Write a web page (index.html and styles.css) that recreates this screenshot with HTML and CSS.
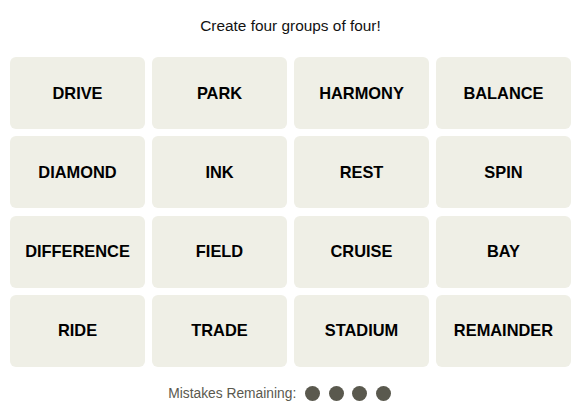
FILE: index.html
```html
<!DOCTYPE html>
<html>
<head>
<meta charset="utf-8">
<link rel="stylesheet" href="styles.css">
</head>
<body>
<main class="game">
  <p class="title">Create four groups of four!</p>
  <div class="board">
    <div class="tile">DRIVE</div>
    <div class="tile">PARK</div>
    <div class="tile">HARMONY</div>
    <div class="tile">BALANCE</div>
    <div class="tile">DIAMOND</div>
    <div class="tile">INK</div>
    <div class="tile">REST</div>
    <div class="tile">SPIN</div>
    <div class="tile">DIFFERENCE</div>
    <div class="tile">FIELD</div>
    <div class="tile">CRUISE</div>
    <div class="tile">BAY</div>
    <div class="tile">RIDE</div>
    <div class="tile">TRADE</div>
    <div class="tile">STADIUM</div>
    <div class="tile">REMAINDER</div>
  </div>
  <div class="mistakes">
    <span class="mistakes-label">Mistakes Remaining:</span>
    <span class="dots">
      <span class="dot"></span><span class="dot"></span><span class="dot"></span><span class="dot"></span>
    </span>
  </div>
</main>
</body>
</html>
```
FILE: styles.css
```css
html, body {
  margin: 0;
  padding: 0;
  background: #ffffff;
}
body {
  font-family: "Liberation Sans", Arial, sans-serif;
  color: #000;
}
.game {
  width: 576px;
  box-sizing: border-box;
  padding: 16px 5px 0 10px;
}
.title {
  margin: 0 0 21px;
  height: 20px;
  line-height: 20px;
  font-size: 15.4px;
  text-align: center;
  color: #121212;
}
.board {
  display: grid;
  grid-template-columns: repeat(4, 135px);
  grid-template-rows: repeat(4, 72px);
  column-gap: 7px;
  row-gap: 7.33px;
}
.tile {
  background: #efefe6;
  border-radius: 6px;
  display: flex;
  align-items: center;
  justify-content: center;
  font-weight: 700;
  font-size: 16.4px;
  color: #000;
  text-transform: uppercase;
}
.mistakes {
  margin-top: 17px;
  height: 20px;
  display: flex;
  align-items: center;
  justify-content: center;
  gap: 9px;
  padding-right: 22px;
}
.mistakes-label {
  font-size: 13.8px;
  color: #5a594e;
}
.dots {
  display: flex;
  gap: 8.5px;
}
.dot {
  width: 15px;
  height: 15px;
  border-radius: 50%;
  background: #5a594e;
}
```
